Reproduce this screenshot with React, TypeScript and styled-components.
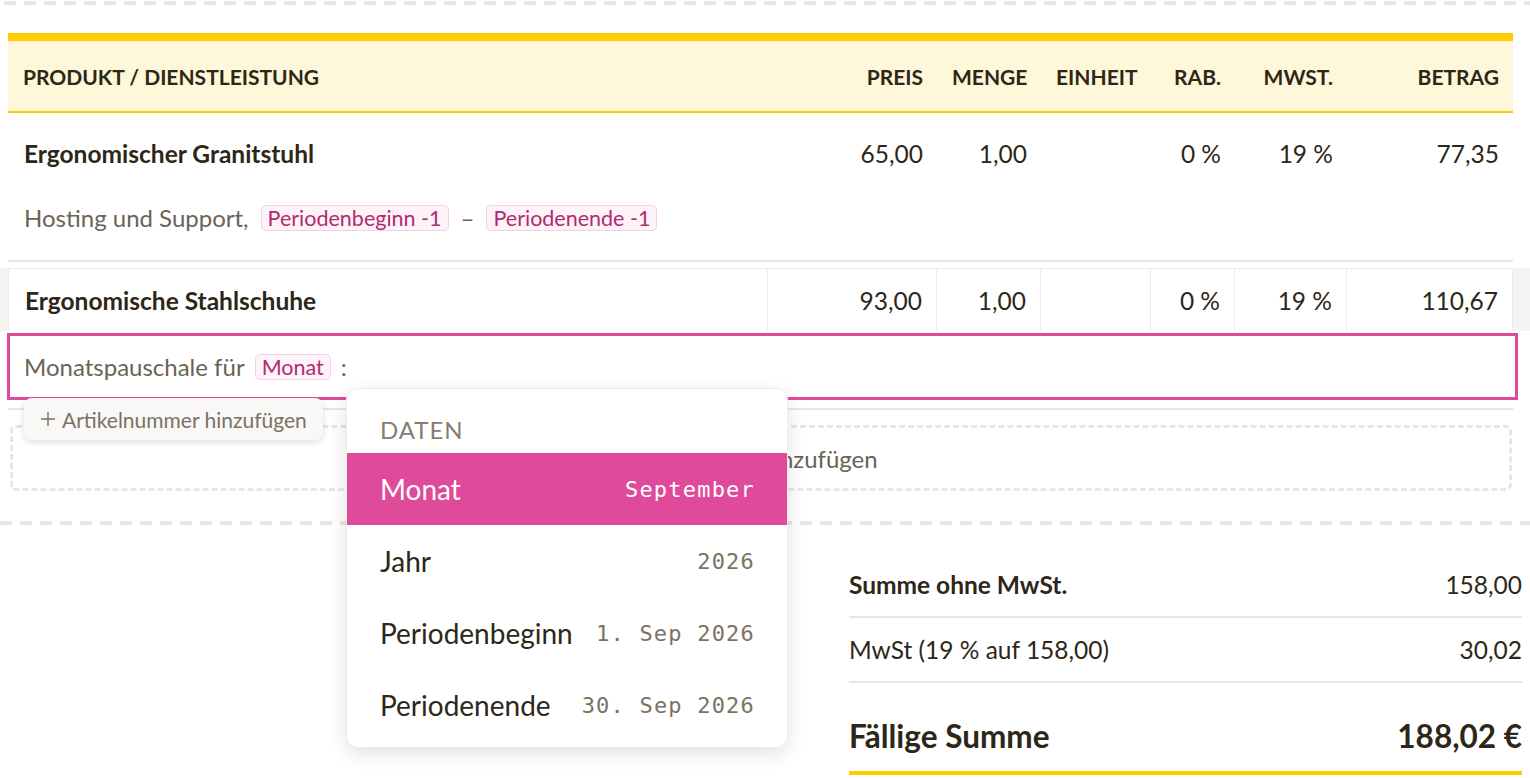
import React from "react";
import styled, { createGlobalStyle } from "styled-components";

const GlobalStyle = createGlobalStyle`
  body {
    margin: 0;
    background: #ffffff;
    font-family: Lato, "Noto Sans", sans-serif;
    color: #2d2718;
  }
`;

const COLUMNS = "1fr 169px 104px 110px 84px 112px 166px";
const INK = "#2d2718";
const MUTED = "#6b6355";
const RULE = "#e8e6e1";
const PINK = "#e04a9b";
const YELLOW = "#ffcc00";

const Page = styled.div`
  position: relative;
  width: 1530px;
  min-height: 778px;
  overflow: hidden;
`;

const DashedRule = styled.div<{ $inset?: number }>`
  height: 4px;
  margin-left: ${(p) => p.$inset ?? 0}px;
  background: repeating-linear-gradient(to right, ${RULE} 0 12px, transparent 12px 20px);
`;

const Table = styled.div`
  margin-top: 28px;
  padding: 0 17px 0 8px;
`;

const HeaderRow = styled.div`
  display: grid;
  grid-template-columns: ${COLUMNS};
  height: 70px;
  align-items: center;
  background: #fff7d9;
  border-top: 8px solid ${YELLOW};
  border-bottom: 2px solid ${YELLOW};
`;

const HeadCell = styled.div<{ $align?: "left" | "right" }>`
  padding: 0 14px 0 15px;
  text-align: ${(p) => p.$align ?? "right"};
  font-size: 21px;
  font-weight: 700;
  text-transform: uppercase;
  color: ${INK};
  white-space: nowrap;
`;

const ItemGroup = styled.div`
  border-bottom: 2px solid ${RULE};
`;

const ItemLine = styled.div`
  display: grid;
  grid-template-columns: ${COLUMNS};
  height: 80px;
  align-items: center;
`;

const Cell = styled.div<{ $bold?: boolean; $align?: "left" | "right" }>`
  padding: 0 14px 0 16px;
  text-align: ${(p) => p.$align ?? "right"};
  font-size: 24.5px;
  font-weight: ${(p) => (p.$bold ? 700 : 400)};
  color: ${INK};
  white-space: nowrap;
`;

const Description = styled.div`
  display: flex;
  align-items: center;
  gap: 12px;
  padding: 10px 16px 27px;
  font-size: 24px;
  line-height: 30px;
  color: ${MUTED};
`;

const Token = styled.span`
  display: inline-flex;
  align-items: center;
  height: 24px;
  padding: 0 6px;
  border: 1px solid #f6d0e2;
  border-radius: 5px;
  background: #fdf3f8;
  color: #b02b71;
  font-size: 21.5px;
`;

const EditArea = styled.div`
  position: relative;
  margin-top: 6px;
`;

const EditLineGutter = styled.div`
  background: #f5f4f2;
  padding: 0 17px 0 8px;
`;

const EditLine = styled.div`
  display: grid;
  grid-template-columns: ${COLUMNS};
  height: 62px;
  align-items: stretch;
  background: #ffffff;
  border-top: 1px solid #ecebe7;
`;

const EditCell = styled(Cell)<{ $divider?: boolean }>`
  display: flex;
  align-items: center;
  justify-content: ${(p) => (p.$align === "left" ? "flex-start" : "flex-end")};
  border-right: 1px solid #ecebe7;
  border-left: ${(p) => (p.$divider ? "1px solid #ecebe7" : "none")};
`;

const FocusBox = styled.div`
  display: flex;
  align-items: center;
  gap: 10px;
  height: 61px;
  margin: 2px 12px 0 7px;
  padding: 0 14px;
  border: 3px solid ${PINK};
  font-size: 24px;
  color: ${MUTED};
`;

const EditFoot = styled.div`
  height: 8px;
  margin: 0 17px 0 8px;
  border-bottom: 2px solid ${RULE};
`;

const SkuButton = styled.button`
  position: absolute;
  left: 24px;
  top: 130px;
  height: 42px;
  padding: 0 16px;
  display: flex;
  align-items: center;
  gap: 6px;
  border: none;
  border-radius: 8px;
  background: #f9f8f6;
  box-shadow: 0 2px 6px rgba(60, 50, 30, 0.16);
  font-family: inherit;
  font-size: 21px;
  color: #7a7264;
`;

const AddLineBox = styled.div`
  display: flex;
  align-items: center;
  justify-content: center;
  gap: 8px;
  height: 60px;
  margin: 15px 18px 0 10px;
  border: 3px dashed ${RULE};
  border-radius: 6px;
  font-size: 24px;
  color: ${MUTED};
`;

const LowerRule = styled(DashedRule)`
  margin-top: 30px;
`;

const Totals = styled.div`
  width: 673px;
  margin: 28px 8px 0 auto;
`;

const TotalRow = styled.div<{ $grand?: boolean }>`
  display: flex;
  justify-content: space-between;
  align-items: ${(p) => (p.$grand ? "flex-end" : "center")};
  height: ${(p) => (p.$grand ? 92 : 65)}px;
  padding-bottom: ${(p) => (p.$grand ? 16 : 0)}px;
  box-sizing: border-box;
  border-bottom: ${(p) => (p.$grand ? `4px solid ${YELLOW}` : `2px solid ${RULE}`)};
  font-size: ${(p) => (p.$grand ? 31.5 : 24.5)}px;
  font-weight: ${(p) => (p.$grand ? 700 : 400)};
  color: ${INK};
`;

const TotalLabel = styled.span<{ $bold?: boolean }>`
  font-weight: ${(p) => (p.$bold ? 700 : "inherit")};
`;

const Menu = styled.div`
  position: absolute;
  left: 346px;
  top: 388px;
  width: 440px;
  padding: 26px 0 6px;
  background: #ffffff;
  border: 1px solid #eeedea;
  border-radius: 12px;
  box-shadow: 0 6px 18px rgba(40, 30, 20, 0.13);
`;

const MenuTitle = styled.div`
  height: 29px;
  line-height: 29px;
  padding: 0 33px 9px;
  font-size: 24px;
  letter-spacing: 1px;
  color: #857d70;
`;

const MenuItem = styled.div<{ $active?: boolean }>`
  display: flex;
  justify-content: space-between;
  align-items: center;
  height: 72px;
  padding: 0 32px 0 33px;
  background: ${(p) => (p.$active ? PINK : "transparent")};
  font-size: 28px;
  color: ${(p) => (p.$active ? "#ffffff" : INK)};
`;

const MenuValue = styled.span<{ $active?: boolean }>`
  font-family: "DejaVu Sans Mono", "Liberation Mono", monospace;
  font-size: 22px;
  letter-spacing: 1.2px;
  color: ${(p) => (p.$active ? "#ffffff" : "#7a7264")};
`;

const Plus = ({ size = 16 }: { size?: number }) => (
  <svg width={size} height={size} viewBox="0 0 16 16" fill="none">
    <path d="M8 1v14M1 8h14" stroke="currentColor" strokeWidth="1.4" />
  </svg>
);

type Item = {
  name: string;
  price: string;
  qty: string;
  unit: string;
  discount: string;
  vat: string;
  amount: string;
};

const items: Item[] = [
  { name: "Ergonomischer Granitstuhl", price: "65,00", qty: "1,00", unit: "", discount: "0 %", vat: "19 %", amount: "77,35" },
  { name: "Ergonomische Stahlschuhe", price: "93,00", qty: "1,00", unit: "", discount: "0 %", vat: "19 %", amount: "110,67" },
];

const dateTokens = [
  { label: "Monat", value: "September" },
  { label: "Jahr", value: "2026" },
  { label: "Periodenbeginn", value: "1. Sep 2026" },
  { label: "Periodenende", value: "30. Sep 2026" },
];

export default function App() {
  const [first, second] = items;

  return (
    <Page>
      <GlobalStyle />
      <DashedRule $inset={4} style={{ marginTop: 1 }} />

      <Table>
        <HeaderRow>
          <HeadCell $align="left">Produkt / Dienstleistung</HeadCell>
          <HeadCell>Preis</HeadCell>
          <HeadCell>Menge</HeadCell>
          <HeadCell $align="left">Einheit</HeadCell>
          <HeadCell>Rab.</HeadCell>
          <HeadCell>MwSt.</HeadCell>
          <HeadCell>Betrag</HeadCell>
        </HeaderRow>

        <ItemGroup>
          <ItemLine>
            <Cell $bold $align="left">{first.name}</Cell>
            <Cell>{first.price}</Cell>
            <Cell>{first.qty}</Cell>
            <Cell $align="left">{first.unit}</Cell>
            <Cell>{first.discount}</Cell>
            <Cell>{first.vat}</Cell>
            <Cell>{first.amount}</Cell>
          </ItemLine>
          <Description>
            <span>Hosting und Support,</span>
            <Token>Periodenbeginn -1</Token>
            <span>–</span>
            <Token>Periodenende -1</Token>
          </Description>
        </ItemGroup>
      </Table>

      <EditArea>
        <EditLineGutter>
          <EditLine>
            <EditCell $bold $align="left" $divider>{second.name}</EditCell>
            <EditCell>{second.price}</EditCell>
            <EditCell>{second.qty}</EditCell>
            <EditCell $align="left">{second.unit}</EditCell>
            <EditCell>{second.discount}</EditCell>
            <EditCell>{second.vat}</EditCell>
            <EditCell>{second.amount}</EditCell>
          </EditLine>
        </EditLineGutter>
        <FocusBox>
          <span>Monatspauschale für</span>
          <Token>Monat</Token>
          <span>:</span>
        </FocusBox>
        <EditFoot />
        <SkuButton>
          <Plus />
          Artikelnummer hinzufügen
        </SkuButton>
      </EditArea>

      <AddLineBox>
        <Plus size={17} />
        Position hinzufügen
      </AddLineBox>

      <LowerRule />

      <Totals>
        <TotalRow>
          <TotalLabel $bold>Summe ohne MwSt.</TotalLabel>
          <span>158,00</span>
        </TotalRow>
        <TotalRow>
          <TotalLabel>MwSt (19 % auf 158,00)</TotalLabel>
          <span>30,02</span>
        </TotalRow>
        <TotalRow $grand>
          <TotalLabel>Fällige Summe</TotalLabel>
          <span>188,02 €</span>
        </TotalRow>
      </Totals>

      <Menu>
        <MenuTitle>DATEN</MenuTitle>
        {dateTokens.map((t, i) => (
          <MenuItem key={t.label} $active={i === 0}>
            <span>{t.label}</span>
            <MenuValue $active={i === 0}>{t.value}</MenuValue>
          </MenuItem>
        ))}
      </Menu>
    </Page>
  );
}
